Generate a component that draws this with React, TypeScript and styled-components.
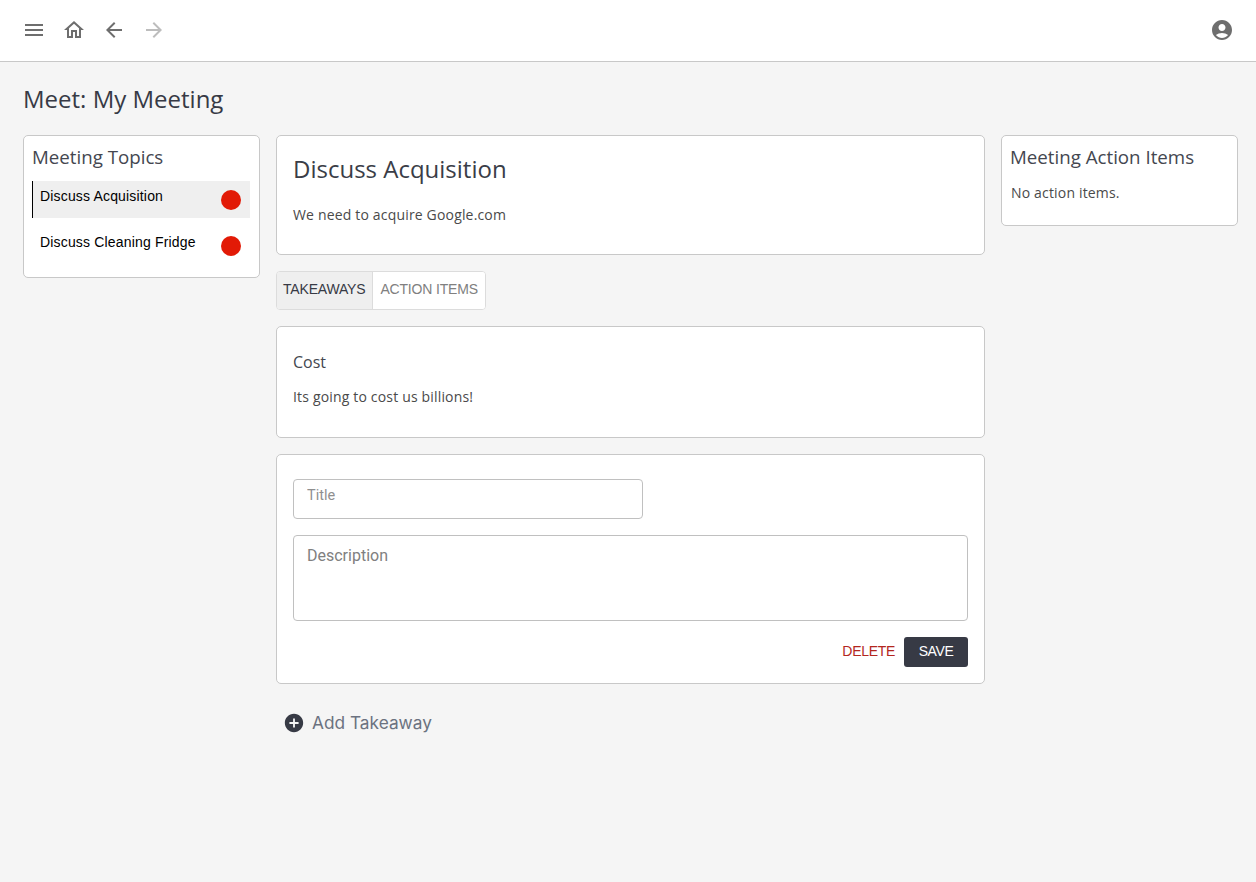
import { createGlobalStyle } from "styled-components";
import styled from "styled-components";
import { MdMenu, MdOutlineHome, MdArrowBack, MdArrowForward, MdAccountCircle, MdAddCircle } from "react-icons/md";

const GlobalStyle = createGlobalStyle`
  html, body {
    margin: 0;
    padding: 0;
    background: #f5f5f5;
    font-family: "Open Sans", "Liberation Sans", sans-serif;
    color: #373a45;
  }
  * { box-sizing: border-box; }
`;

const Page = styled.div`
  min-height: 882px;
  background: #f5f5f5;
`;

const TopBar = styled.header`
  height: 62px;
  background: #fff;
  border-bottom: 1px solid #c8c8c8;
  display: flex;
  align-items: center;
  justify-content: space-between;
  padding: 0 22px 2px 22px;
`;

const NavGroup = styled.div`
  display: flex;
  align-items: center;
  gap: 16px;
`;

const NavIcon = styled.span<{ $disabled?: boolean }>`
  display: flex;
  font-size: 24px;
  color: ${({ $disabled }) => ($disabled ? "#bdbdbd" : "#6e6e6e")};
`;

const Main = styled.main`
  padding: 0 18px 0 23px;
`;

const PageTitle = styled.h1`
  margin: 0;
  padding-top: 20px;
  height: 73px;
  font-size: 24px;
  line-height: 33px;
  font-weight: 400;
`;

const Columns = styled.div`
  display: grid;
  grid-template-columns: 237px 709px 237px;
  gap: 16px;
  align-items: start;
`;

const Stack = styled.div`
  display: flex;
  flex-direction: column;
  gap: 16px;
`;

const Card = styled.section`
  background: #fff;
  border: 1px solid #c8c8c8;
  border-radius: 5px;
`;

const SideCard = styled(Card)`
  padding: 8px 9px 0 8px;
`;

const SideTitle = styled.h2`
  margin: 0;
  font-size: 18.72px;
  line-height: 26px;
  font-weight: 400;
  color: #444750;
`;

const TopicList = styled.div`
  margin-top: 11px;
  padding-bottom: 4px;
`;

const TopicRow = styled.div<{ $active?: boolean }>`
  height: 37px;
  margin-bottom: 9px;
  padding: 7px 9px 0 7px;
  display: flex;
  justify-content: space-between;
  background: ${({ $active }) => ($active ? "#efefef" : "transparent")};
  border-left: 1px solid ${({ $active }) => ($active ? "#000" : "transparent")};
  font-family: "Liberation Sans", Arial, sans-serif;
  font-size: 14px;
  line-height: 16px;
  letter-spacing: 0.17px;
  color: #000;
`;

const StatusDot = styled.span`
  width: 20px;
  height: 20px;
  margin-top: 2px;
  border-radius: 50%;
  background: #e21a06;
`;

const TopicCard = styled(Card)`
  height: 120px;
  padding: 16px;
`;

const TopicTitle = styled.h2`
  margin: 0;
  font-size: 24px;
  line-height: 33px;
  font-weight: 400;
  color: #3a3d47;
`;

const BodyText = styled.p`
  margin: 0;
  font-size: 14px;
  line-height: 19px;
  letter-spacing: 0.17px;
  color: #4a4a4a;
`;

const TopicText = styled(BodyText)`
  margin-top: 20px;
`;

const Tabs = styled.div`
  display: flex;
  width: fit-content;
  height: 39px;
  background: #fff;
  border: 1px solid #dcdcdc;
  border-radius: 4px;
  overflow: hidden;
`;

const Tab = styled.button<{ $active?: boolean }>`
  border: none;
  padding: ${({ $active }) => ($active ? "0 7px 3px 6px" : "0 7px 3px")};
  background: ${({ $active }) => ($active ? "#efefef" : "#fff")};
  border-left: ${({ $active }) => ($active ? "none" : "1px solid #dcdcdc")};
  color: ${({ $active }) => ($active ? "#373a45" : "#808080")};
  font-family: "Liberation Sans", Arial, sans-serif;
  font-size: 14px;
  letter-spacing: -0.18px;
`;

const TakeawayCard = styled(Card)`
  height: 112px;
  padding: 24px 16px 0;
`;

const TakeawayTitle = styled.h3`
  margin: 0 0 14px;
  font-size: 16px;
  line-height: 22px;
  font-weight: 400;
  color: #444750;
`;

const FormCard = styled(Card)`
  height: 230px;
  padding: 24px 16px 0;
  display: flex;
  flex-direction: column;
`;

const TitleInput = styled.input`
  width: 350px;
  height: 40px;
  padding: 0 13px 8px;
  border: 1px solid #c0c0c0;
  border-radius: 4px;
  outline: none;
  font-family: "Roboto", "Liberation Sans", sans-serif;
  font-size: 14.5px;
  &::placeholder { color: #8f8f8f; }
`;

const DescriptionInput = styled.textarea`
  width: 100%;
  height: 86px;
  margin-top: 16px;
  padding: 10px 13px;
  border: 1px solid #c0c0c0;
  border-radius: 4px;
  outline: none;
  resize: none;
  font-family: "Roboto", "Liberation Sans", sans-serif;
  font-size: 16px;
  line-height: 20px;
  &::placeholder { color: #808080; }
`;

const FormActions = styled.div`
  margin-top: 16px;
  display: flex;
  justify-content: flex-end;
  align-items: center;
  gap: 9px;
`;

const DeleteButton = styled.button`
  border: none;
  background: none;
  padding: 0 0 2px;
  color: #b3261e;
  font-family: "Liberation Sans", Arial, sans-serif;
  font-size: 14px;
  letter-spacing: -0.3px;
`;

const SaveButton = styled.button`
  width: 64px;
  height: 30px;
  padding: 0 0 2px;
  border: none;
  border-radius: 3px;
  background: #373a45;
  color: #fff;
  font-family: "Liberation Sans", Arial, sans-serif;
  font-size: 14px;
  letter-spacing: -0.4px;
`;

const AddRow = styled.div`
  display: flex;
  align-items: center;
  gap: 7px;
  padding: 10px 0 0 7px;
  font-family: "Inter", "Liberation Sans", sans-serif;
  font-size: 17.3px;
  line-height: 26px;
  color: #6b7280;
  svg { color: #373a45; }
`;

const ActionCard = styled(SideCard)`
  height: 91px;
`;

const ActionText = styled(BodyText)`
  margin-top: 13px;
  padding-left: 1px;
`;

export default function App() {
  return (
    <Page>
      <GlobalStyle />
      <TopBar>
        <NavGroup>
          <NavIcon><MdMenu /></NavIcon>
          <NavIcon><MdOutlineHome /></NavIcon>
          <NavIcon><MdArrowBack /></NavIcon>
          <NavIcon $disabled><MdArrowForward /></NavIcon>
        </NavGroup>
        <NavIcon><MdAccountCircle /></NavIcon>
      </TopBar>
      <Main>
        <PageTitle>Meet: My Meeting</PageTitle>
        <Columns>
          <SideCard>
            <SideTitle>Meeting Topics</SideTitle>
            <TopicList>
              <TopicRow $active>Discuss Acquisition<StatusDot /></TopicRow>
              <TopicRow>Discuss Cleaning Fridge<StatusDot /></TopicRow>
            </TopicList>
          </SideCard>
          <Stack>
            <TopicCard>
              <TopicTitle>Discuss Acquisition</TopicTitle>
              <TopicText>We need to acquire Google.com</TopicText>
            </TopicCard>
            <Tabs>
              <Tab $active>TAKEAWAYS</Tab>
              <Tab>ACTION ITEMS</Tab>
            </Tabs>
            <TakeawayCard>
              <TakeawayTitle>Cost</TakeawayTitle>
              <BodyText>Its going to cost us billions!</BodyText>
            </TakeawayCard>
            <FormCard>
              <TitleInput placeholder="Title" />
              <DescriptionInput placeholder="Description" />
              <FormActions>
                <DeleteButton>DELETE</DeleteButton>
                <SaveButton>SAVE</SaveButton>
              </FormActions>
            </FormCard>
            <AddRow>
              <MdAddCircle size={22} />
              Add Takeaway
            </AddRow>
          </Stack>
          <ActionCard>
            <SideTitle>Meeting Action Items</SideTitle>
            <ActionText>No action items.</ActionText>
          </ActionCard>
        </Columns>
      </Main>
    </Page>
  );
}
